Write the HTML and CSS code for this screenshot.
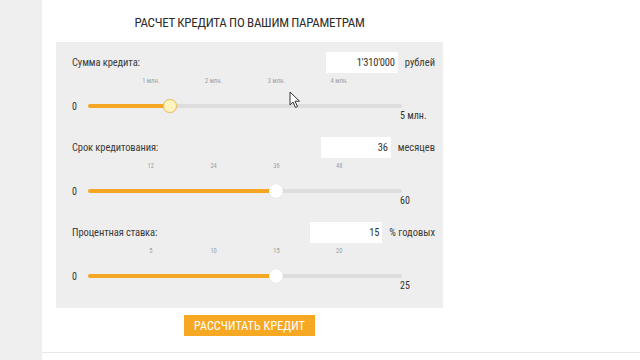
FILE: index.html
```html
<!DOCTYPE html>
<html lang="ru">
<head>
<meta charset="utf-8">
<title>Расчет кредита</title>
<link rel="stylesheet" href="styles.css">
</head>
<body>
<div class="strip"></div>
<main class="main">
  <div class="wrap">
    <h1 class="title">РАСЧЕТ КРЕДИТА ПО ВАШИМ ПАРАМЕТРАМ</h1>
    <section class="panel">
      <div class="field">
        <div class="head">
          <span class="label">Сумма кредита:</span>
          <span class="input w72">1'310'000</span>
          <span class="unit">рублей</span>
        </div>
        <div class="ticks">
          <span class="tick" style="left:20%">1 млн.</span>
          <span class="tick" style="left:40%">2 млн.</span>
          <span class="tick" style="left:60%">3 млн.</span>
          <span class="tick" style="left:80%">4 млн.</span>
        </div>
        <div class="slider">
          <span class="min">0</span>
          <div class="track">
            <div class="fill" style="width:26.2%"></div>
            <div class="thumb active" style="left:26.2%"></div>
          </div>
        </div>
        <div class="max">5 млн.</div>
      </div>

      <div class="field">
        <div class="head">
          <span class="label">Срок кредитования:</span>
          <span class="input w70">36</span>
          <span class="unit">месяцев</span>
        </div>
        <div class="ticks">
          <span class="tick" style="left:20%">12</span>
          <span class="tick" style="left:40%">24</span>
          <span class="tick" style="left:60%">36</span>
          <span class="tick" style="left:80%">48</span>
        </div>
        <div class="slider">
          <span class="min">0</span>
          <div class="track">
            <div class="fill" style="width:60%"></div>
            <div class="thumb" style="left:60%"></div>
          </div>
        </div>
        <div class="max">60</div>
      </div>

      <div class="field">
        <div class="head">
          <span class="label">Процентная ставка:</span>
          <span class="input w72">15</span>
          <span class="unit">% годовых</span>
        </div>
        <div class="ticks">
          <span class="tick" style="left:20%">5</span>
          <span class="tick" style="left:40%">10</span>
          <span class="tick" style="left:60%">15</span>
          <span class="tick" style="left:80%">20</span>
        </div>
        <div class="slider">
          <span class="min">0</span>
          <div class="track">
            <div class="fill" style="width:60%"></div>
            <div class="thumb" style="left:60%"></div>
          </div>
        </div>
        <div class="max">25</div>
      </div>
    </section>
    <div class="actions">
      <button class="btn" type="button">РАССЧИТАТЬ КРЕДИТ</button>
    </div>
  </div>
  <div class="footline"></div>
  <svg class="cursor" width="12" height="18" viewBox="0 0 12 18" aria-hidden="true">
    <path d="M1 1 L1 14 L4 11 L6.5 16.5 L8.5 15.6 L6 10.2 L10.5 10.2 Z" fill="#fff" stroke="#333" stroke-width="1" stroke-linejoin="round"/>
  </svg>
</main>
</body>
</html>
```

FILE: styles.css
```css
* { box-sizing: border-box; }
html, body { margin: 0; padding: 0; }
body {
  width: 640px;
  height: 360px;
  overflow: hidden;
  display: flex;
  background: #ffffff;
  font-family: "Liberation Sans Narrow", "Roboto Condensed", Roboto, "Liberation Sans", sans-serif;
  color: #333333;
}
.strip {
  width: 42px;
  height: 360px;
  background: #efefef;
  flex: none;
}
.main {
  position: relative;
  flex: 1;
  height: 360px;
  display: flex;
  flex-direction: column;
}
.wrap {
  margin-left: 14px;
  width: 387px;
}
.title {
  margin: 0;
  height: 42px;
  display: flex;
  align-items: center;
  justify-content: center;
  font-size: 13px;
  font-weight: normal;
  color: #2d2d2d;
  letter-spacing: -0.3px;
  padding-top: 3px;
}
.panel {
  background: #eeeeee;
  height: 266px;
  padding: 10px 8px 0 16px;
  display: flex;
  flex-direction: column;
  gap: 16px;
}
.field { display: flex; flex-direction: column; }
.head {
  display: flex;
  align-items: center;
  height: 21px;
  gap: 7px;
}
.label {
  flex: 1;
  font-size: 10.5px;
  color: #3a3a3a;
  letter-spacing: -0.1px;
}
.input {
  height: 21px;
  background: #ffffff;
  font-size: 10.5px;
  color: #333;
  display: flex;
  align-items: center;
  justify-content: flex-end;
  padding-right: 3px;
  letter-spacing: -0.2px;
}
.w72 { width: 72px; }
.w70 { width: 70px; }
.unit {
  font-size: 10.5px;
  color: #3a3a3a;
}
.ticks {
  position: relative;
  margin-left: 16px;
  width: 314px;
  height: 10px;
  margin-top: 3px;
}
.tick {
  position: absolute;
  top: 0;
  transform: translateX(-50%);
  font-size: 6.5px;
  line-height: 10px;
  color: #a0a0a0;
  white-space: nowrap;
}
.slider {
  display: flex;
  align-items: center;
  height: 8px;
  margin-top: 16px;
}
.min {
  width: 16px;
  font-size: 10px;
  color: #333;
}
.track {
  position: relative;
  width: 314px;
  height: 4px;
  background: #dddddd;
  border-radius: 2px;
}
.fill {
  height: 4px;
  background: #f5a623;
  border-radius: 2px;
}
.thumb {
  position: absolute;
  top: 50%;
  width: 14px;
  height: 14px;
  border-radius: 50%;
  background: #ffffff;
  transform: translate(-50%, -50%);
  box-shadow: 0 0 1px rgba(0,0,0,0.15);
}
.thumb.active {
  background: #fff3bf;
  border: 1px solid #f3c45c;
}
.max {
  margin-left: 328px;
  height: 10px;
  line-height: 10px;
  margin-top: 1px;
  font-size: 10px;
  color: #333;
  white-space: nowrap;
}
.actions {
  display: flex;
  justify-content: center;
  margin-top: 7px;
}
.btn {
  width: 131px;
  height: 21px;
  border: none;
  padding: 0;
  background: #f6a823;
  color: #ffffff;
  font-family: inherit;
  font-size: 12px;
  letter-spacing: 0.1px;
}
.footline {
  margin-top: 16px;
  height: 1px;
  background: #e8e8e8;
  width: 100%;
}
.cursor {
  position: absolute;
  left: 247px;
  top: 91px;
}
```
